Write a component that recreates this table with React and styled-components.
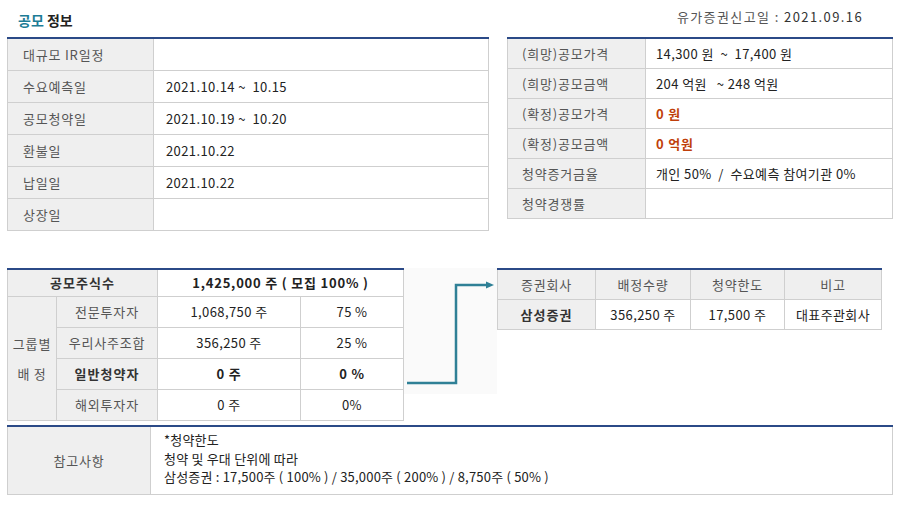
import React from 'react';
import styled, { createGlobalStyle } from 'styled-components';

const GlobalStyle = createGlobalStyle`
  body {
    margin: 0;
    background: #fff;
    font-family: "Noto Sans CJK KR", "Noto Sans", sans-serif;
    font-size: 13px;
    color: #222;
  }
`;

const Page = styled.div`
  width: 910px;
  padding: 0 17px 0 7px;
  box-sizing: border-box;
`;

const Header = styled.div`
  display: flex;
  justify-content: space-between;
  align-items: flex-start;
  height: 37px;
`;

const Title = styled.h2`
  margin: 0;
  padding: 10px 0 0 11px;
  font-size: 14px;
  font-weight: 700;
  line-height: 20px;
  color: #222;
  letter-spacing: 0;

  span {
    color: #1d7c96;
  }
`;

const FiledDate = styled.div`
  padding: 7px 30px 0 0;
  font-size: 13px;
  line-height: 20px;
  color: #555;
  letter-spacing: 1.4px;

  b {
    font-weight: 400;
    color: #333;
  }
`;

const Row = styled.div`
  display: flex;
  align-items: flex-start;
  gap: ${p => p.$gap || 0}px;
  margin-top: ${p => p.$top || 0}px;
`;

const Table = styled.table`
  width: ${p => p.$width}px;
  border-collapse: collapse;
  border-top: 2px solid #2b4a87;
  table-layout: fixed;
  flex: none;
`;

const Th = styled.th`
  height: ${p => p.$h || 30}px;
  padding: 0 ${p => p.$pad ?? 0}px;
  border: 1px solid #cfcfcf;
  background: #efefef;
  color: ${p => (p.$strong ? '#333' : '#555')};
  font-weight: ${p => (p.$strong ? 700 : 400)};
  text-align: ${p => p.$align || 'left'};
  line-height: 18px;
  white-space: nowrap;
  letter-spacing: ${p => (p.$strong ? 1 : 0.8)}px;
`;

const Td = styled.td`
  height: ${p => p.$h || 30}px;
  padding: 0 ${p => p.$pad ?? 0}px;
  border: 1px solid #cfcfcf;
  background: #fff;
  color: ${p => (p.$red ? '#bf3f0b' : '#222')};
  font-weight: ${p => (p.$strong ? 700 : 400)};
  text-align: ${p => p.$align || 'left'};
  line-height: 18px;
  white-space: pre;
  letter-spacing: ${p => (p.$strong ? 0.8 : 0.4)}px;
`;

const ArrowZone = styled.div`
  width: 93px;
  height: 126px;
  flex: none;
  background: #fafafa;
`;

const NoteCell = styled(Td)`
  padding: 4px 13px 6px;
  line-height: 18.5px;
  vertical-align: top;
  letter-spacing: 0.2px;
`;

const Col = styled.col``;

const scheduleRows = [
  ['대규모 IR일정', ''],
  ['수요예측일', '2021.10.14 ~  10.15'],
  ['공모청약일', '2021.10.19 ~  10.20'],
  ['환불일', '2021.10.22'],
  ['납일일', '2021.10.22'],
  ['상장일', ''],
];

const priceRows = [
  ['(희망)공모가격', '14,300 원  ~  17,400 원'],
  ['(희망)공모금액', '204 억원   ~ 248 억원'],
  ['(확정)공모가격', '0 원', true],
  ['(확정)공모금액', '0 억원', true],
  ['청약증거금율', '개인 50%  /  수요예측 참여기관 0%'],
  ['청약경쟁률', ''],
];

const groupRows = [
  ['전문투자자', '1,068,750 주', '75 %'],
  ['우리사주조합', '356,250 주', '25 %'],
  ['일반청약자', '0 주', '0 %', true],
  ['해외투자자', '0 주', '0%'],
];

const Arrow = () => (
  <svg width="93" height="126" viewBox="0 0 93 126">
    <polyline
      points="3,115 52,115 52,17 84,17"
      fill="none"
      stroke="#2f8096"
      strokeWidth="2.5"
    />
    <polygon points="82,13.5 90,17 82,20.5" fill="#2f8096" />
  </svg>
);

export default function App() {
  return (
    <Page>
      <GlobalStyle />
      <Header>
        <Title><span>공모</span> 정보</Title>
        <FiledDate>유가증권신고일 : <b>2021.09.16</b></FiledDate>
      </Header>

      <Row $gap={18}>
        <Table $width={482}>
          <colgroup>
            <Col style={{ width: 146 }} />
            <Col />
          </colgroup>
          <tbody>
            {scheduleRows.map(([label, value]) => (
              <tr key={label}>
                <Th $h={31} $pad={15}>{label}</Th>
                <Td $h={31} $pad={12}>{value}</Td>
              </tr>
            ))}
          </tbody>
        </Table>

        <Table $width={386}>
          <colgroup>
            <Col style={{ width: 138 }} />
            <Col />
          </colgroup>
          <tbody>
            {priceRows.map(([label, value, red]) => (
              <tr key={label}>
                <Th $h={29} $pad={14}>{label}</Th>
                <Td $h={29} $pad={10} $red={red} $strong={red}>{value}</Td>
              </tr>
            ))}
          </tbody>
        </Table>
      </Row>

      <Row $top={37}>
        <Table $width={397}>
          <colgroup>
            <Col style={{ width: 49 }} />
            <Col style={{ width: 101 }} />
            <Col style={{ width: 143 }} />
            <Col />
          </colgroup>
          <tbody>
            <tr>
              <Th colSpan={2} $h={26} $align="center" $strong>공모주식수</Th>
              <Td colSpan={2} $h={26} $align="center" $strong>1,425,000 주 ( 모집 100% )</Td>
            </tr>
            {groupRows.map(([label, qty, ratio, strong], i) => (
              <tr key={label}>
                {i === 0 && (
                  <Th rowSpan={4} $align="center" style={{ lineHeight: '30px' }}>
                    그룹별<br />배 정
                  </Th>
                )}
                <Th $h={30} $align="center" $strong={strong}>{label}</Th>
                <Td $h={30} $align="center" $strong={strong}>{qty}</Td>
                <Td $h={30} $align="center" $strong={strong}>{ratio}</Td>
              </tr>
            ))}
          </tbody>
        </Table>

        <ArrowZone>
          <Arrow />
        </ArrowZone>

        <Table $width={385}>
          <colgroup>
            <Col style={{ width: 98 }} />
            <Col style={{ width: 95 }} />
            <Col style={{ width: 94 }} />
            <Col />
          </colgroup>
          <tbody>
            <tr>
              <Th $h={29} $align="center">증권회사</Th>
              <Th $h={29} $align="center">배정수량</Th>
              <Th $h={29} $align="center">청약한도</Th>
              <Th $h={29} $align="center">비고</Th>
            </tr>
            <tr>
              <Th $h={29} $align="center" $strong>삼성증권</Th>
              <Td $h={29} $align="center">356,250 주</Td>
              <Td $h={29} $align="center">17,500 주</Td>
              <Td $h={29} $align="center">대표주관회사</Td>
            </tr>
          </tbody>
        </Table>
      </Row>

      <Row $top={4}>
        <Table $width={886}>
          <colgroup>
            <Col style={{ width: 143 }} />
            <Col />
          </colgroup>
          <tbody>
            <tr>
              <Th $h={67} $align="center">참고사항</Th>
              <NoteCell>
                {'*청약한도\n청약 및 우대 단위에 따라\n삼성증권 : 17,500주 ( 100% ) / 35,000주 ( 200% ) / 8,750주 ( 50% )'}
              </NoteCell>
            </tr>
          </tbody>
        </Table>
      </Row>
    </Page>
  );
}
